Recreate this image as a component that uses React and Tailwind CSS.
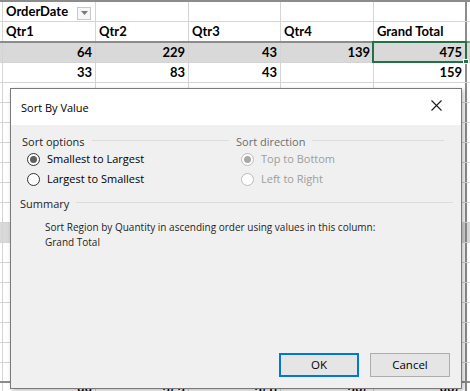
import React from "react";

const xl = { fontFamily: "Lato, 'Liberation Sans', sans-serif" };
const ui = { fontFamily: "'Open Sans', 'Noto Sans', sans-serif" };

// rows that sit behind the dialog: their values are covered, so left blank
const hiddenRows = Array.from({ length: 15 }, () => ["", "", "", "", ""]);

const widths = ["w-[93px]", "w-[93px]", "w-[92px]", "w-[93px]", "w-[93px]"];

function Cells({ values, right, bg }) {
  return (
    <>
      <div className={`w-[3px] shrink-0 border-r border-[#d4d4d4] ${bg}`}></div>
      {values.map((v, i) => (
        <div
          key={i}
          className={`${widths[i]} shrink-0 px-[3px] flex items-center overflow-hidden whitespace-nowrap ${
            i === 4 ? "border-r-2 border-[#8c8c8c]" : "border-r border-[#d4d4d4]"
          } ${right ? "justify-end" : ""} ${bg}`}
        >
          {v}
        </div>
      ))}
      <div className={`flex-1 ${bg}`}></div>
    </>
  );
}

function Radio({ label, checked, disabled }) {
  return (
    <div className="flex items-center h-[20px] pl-[5px]">
      <span
        className={`w-[13px] h-[13px] rounded-full border flex items-center justify-center bg-white ${
          disabled ? "border-[#bcbcbc]" : "border-[#333333]"
        }`}
      >
        {checked && (
          <span className={`w-[7px] h-[7px] rounded-full ${disabled ? "bg-[#a8a8a8]" : "bg-[#5f5f5f]"}`}></span>
        )}
      </span>
      <span className={`ml-[7px] ${disabled ? "text-[#9d9d9d]" : "text-black"}`}>{label}</span>
    </div>
  );
}

function GroupLabel({ children, muted }) {
  return (
    <div className="flex items-center h-[16px]">
      <span className={muted ? "text-[#6d6d6d]" : "text-[#1e1e1e]"}>{children}</span>
      <span className="flex-1 ml-[7px] -mt-[3px] border-t border-[#dcdcdc]"></span>
    </div>
  );
}

export default function App() {
  return (
    <div className="relative w-[470px] h-[391px] bg-white overflow-hidden text-[13px] font-bold text-black" style={xl}>
      {/* grid */}
      <div className="border-t-2 border-[#8c8c8c]">
        <div className="flex h-[20px] border-b border-[#d4d4d4]">
          <div className="w-[3px] shrink-0 border-r border-[#d4d4d4]"></div>
          <div className="w-[93px] shrink-0 px-[3px] flex items-center border-r border-[#d4d4d4]">
            <span>OrderDate</span>
            <span className="ml-[9px] mt-[3px] w-[14px] h-[13px] border border-[#c8c8c8] bg-[#f7f7f7] flex items-center justify-center">
              <svg width="7" height="4" viewBox="0 0 7 4">
                <path d="M0 0 L7 0 L3.5 4 Z" fill="#7a7a7a" />
              </svg>
            </span>
          </div>
          <div className="w-[93px] shrink-0 border-r border-[#d4d4d4]"></div>
          <div className="w-[92px] shrink-0 border-r border-[#d4d4d4]"></div>
          <div className="w-[93px] shrink-0 border-r border-[#d4d4d4]"></div>
          <div className="w-[93px] shrink-0 border-r-2 border-[#8c8c8c]"></div>
          <div className="flex-1"></div>
        </div>
        <div className="flex h-[21px] border-b-2 border-[#8c8c8c]">
          <Cells values={["Qtr1", "Qtr2", "Qtr3", "Qtr4", "Grand Total"]} bg="" />
        </div>
        <div className="relative flex h-[20px] border-b border-[#d4d4d4]">
          <Cells values={["64", "229", "43", "139", "475"]} right bg="bg-[#d9d9d9]" />
          <div className="absolute left-[372px] -top-[2px] w-[95px] h-[22px] border-2 border-[#217346]"></div>
          <div className="absolute left-[463px] top-[16px] w-[6px] h-[5px] bg-[#217346] border border-white"></div>
        </div>
        <div className="flex h-[20px] border-b border-[#d4d4d4]">
          <Cells values={["33", "83", "43", "", "159"]} right bg="" />
        </div>
        {hiddenRows.map((r, i) => (
          <div
            key={i}
            className={`flex h-[20px] ${i === 14 ? "border-b-2 border-[#8c8c8c]" : "border-b border-[#d4d4d4]"}`}
          >
            <Cells values={r} right bg={i === 7 ? "bg-[#d9d9d9]" : ""} />
          </div>
        ))}
        <div className="flex h-[20px] border-b border-[#d4d4d4]">
          <Cells values={["88", "253", "259", "285", "885"]} right bg="" />
        </div>
      </div>

      {/* Sort By Value dialog */}
      <div
        className="absolute left-[10px] top-[88px] w-[452px] h-[301px] flex flex-col border border-[#7a7a7a] bg-[#f0f0f0] shadow-[2px_2px_5px_rgba(0,0,0,0.25)] text-[11px] font-normal"
        style={ui}
      >
        <div className="h-[36px] bg-white flex items-center justify-between pl-[10px] pr-[19px]">
          <span className="text-black mt-[2px]">Sort By Value</span>
          <svg width="11" height="11" viewBox="0 0 11 11" className="mt-[-4px]">
            <path d="M0.5 0.5 L10.5 10.5 M10.5 0.5 L0.5 10.5" stroke="#1a1a1a" strokeWidth="1.1" />
          </svg>
        </div>

        <div className="flex-1 flex flex-col pt-[9px] pb-[11px]">
          <div className="flex pl-[11px] gap-[7px]">
            <div className="w-[207px] flex flex-col">
              <GroupLabel>Sort options</GroupLabel>
              <div className="-mt-[1px]">
                <Radio label="Smallest to Largest" checked />
                <Radio label="Largest to Smallest" />
              </div>
            </div>
            <div className="w-[208px] flex flex-col">
              <GroupLabel muted>Sort direction</GroupLabel>
              <div className="-mt-[1px]">
                <Radio label="Top to Bottom" checked disabled />
                <Radio label="Left to Right" disabled />
              </div>
            </div>
          </div>

          <div className="mt-[7px] pl-[9px] pr-[8px]">
            <GroupLabel>Summary</GroupLabel>
          </div>
          <div className="mt-[8px] pl-[34px] leading-[15px] text-[10px] text-[#1e1e1e]">
            <div>Sort Region by Quantity in ascending order using values in this column:</div>
            <div>Grand Total</div>
          </div>

          <div className="mt-auto flex justify-end gap-[11px] pr-[11px]">
            <button className="w-[80px] h-[24px] border-2 border-[#0078d7] bg-[#e5e5e5] text-black text-[11.5px]">OK</button>
            <button className="w-[80px] h-[24px] border border-[#adadad] bg-[#e5e5e5] text-black text-[11.5px]">Cancel</button>
          </div>
        </div>
      </div>
    </div>
  );
}
